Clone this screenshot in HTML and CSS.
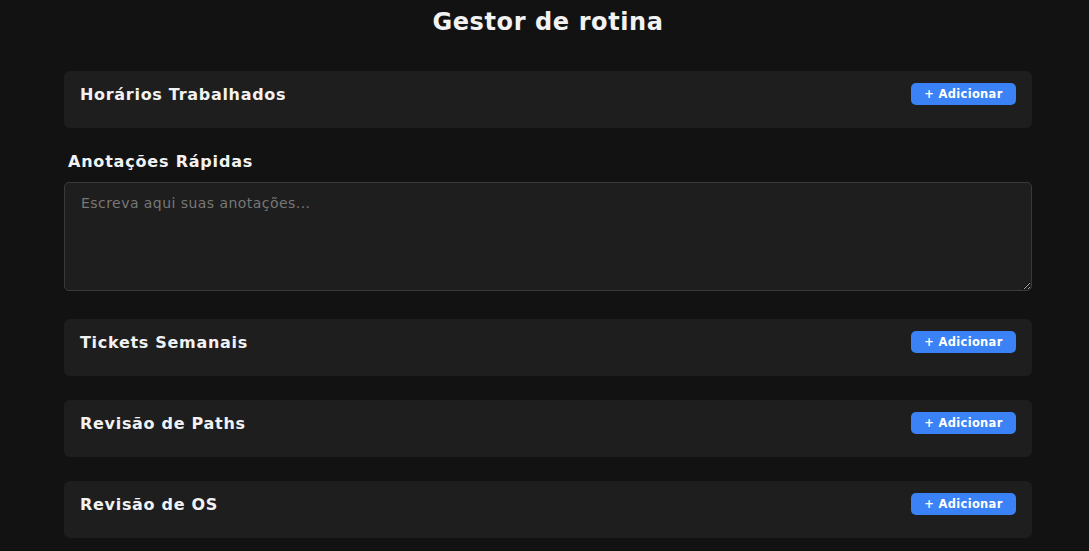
FILE: index.html
```html
<!DOCTYPE html>
<html lang="pt-BR">
<head>
<meta charset="utf-8">
<title>Gestor de rotina</title>
<link rel="stylesheet" href="styles.css">
</head>
<body>
<div class="app">
  <h1 class="title">Gestor de rotina</h1>
  <section class="card card-first">
    <div class="card-head">
      <h2 class="card-title">Horários Trabalhados</h2>
      <button class="btn">+ Adicionar</button>
    </div>
  </section>
  <section class="notes">
    <h2 class="notes-title">Anotações Rápidas</h2>
    <textarea class="notes-area" placeholder="Escreva aqui suas anotações..."></textarea>
  </section>
  <section class="card">
    <div class="card-head">
      <h2 class="card-title">Tickets Semanais</h2>
      <button class="btn">+ Adicionar</button>
    </div>
  </section>
  <section class="card">
    <div class="card-head">
      <h2 class="card-title">Revisão de Paths</h2>
      <button class="btn">+ Adicionar</button>
    </div>
  </section>
  <section class="card card-last">
    <div class="card-head">
      <h2 class="card-title">Revisão de OS</h2>
      <button class="btn">+ Adicionar</button>
    </div>
  </section>
</div>
</body>
</html>
```

FILE: styles.css
```css
html, body {
  margin: 0;
  padding: 0;
  background: #121212;
  color: #f2f2f2;
  font-family: "DejaVu Sans", Inter, sans-serif;
}
.app {
  width: 968px;
  margin-left: 64px;
  padding: 6px 0 0;
  display: flex;
  flex-direction: column;
}
.title {
  margin: 0 0 33px;
  text-align: center;
  font-size: 24px;
  line-height: 32px;
  font-weight: 700;
  letter-spacing: 0.6px;
}
.card {
  box-sizing: border-box;
  height: 57px;
  background: #1e1e1e;
  border-radius: 6px;
  padding: 12px 16px;
  margin-bottom: 24px;
}
.card-first {
  margin-bottom: 24px;
}
.card-last {
  margin-bottom: 0;
}
.card-head {
  display: flex;
  justify-content: space-between;
  align-items: center;
  height: 22px;
}
.card-title {
  margin: 0;
  font-size: 16px;
  font-weight: 700;
  letter-spacing: 0.7px;
}
.btn {
  background: #3b82f6;
  color: #fff;
  border: none;
  border-radius: 5px;
  height: 22px;
  width: 105px;
  font-family: inherit;
  font-size: 11.5px;
  font-weight: 700;
  letter-spacing: 0.3px;
  padding: 0;
}
.notes {
  display: flex;
  flex-direction: column;
  margin-bottom: 28px;
}
.notes-title {
  margin: 0 0 10px 4px;
  font-size: 16px;
  font-weight: 700;
  line-height: 20px;
  letter-spacing: 0.8px;
}
.notes-area {
  box-sizing: border-box;
  height: 109px;
  background: #1e1e1e;
  border: 1px solid #3a3a3a;
  border-radius: 5px;
  color: #ddd;
  padding: 12px 16px;
  font-family: inherit;
  font-size: 14px;
  letter-spacing: 0.45px;
  resize: vertical;
}
.notes-area::placeholder {
  color: #777;
}
```
